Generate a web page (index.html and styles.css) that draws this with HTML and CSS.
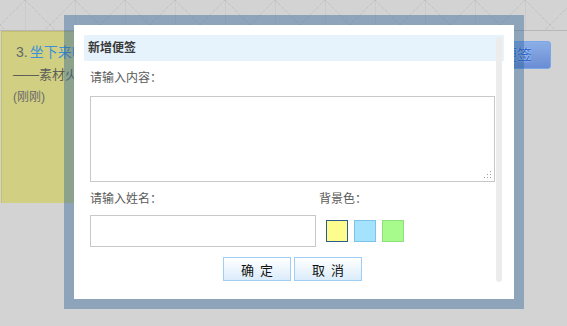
FILE: index.html
```html
<!DOCTYPE html>
<html lang="zh-CN">
<head>
    <meta charset="UTF-8">
    <title>便签墙</title>
    <link rel="stylesheet" href="styles.css">
</head>
<body>
    <div class="topbar">
        <svg width="100%" height="30">
            <defs>
                <pattern id="zig" width="50" height="30" patternUnits="userSpaceOnUse">
                    <path d="M25.5 0V30" stroke="#cbcbcb" stroke-width="1"/>
                    <path d="M25 0L55 30M25 0L-5 30M-25 0L5 30M75 0L45 30" stroke="#b9b9b9" stroke-width="1" fill="none" stroke-dasharray="1 1"/>
                </pattern>
            </defs>
            <rect width="100%" height="30" fill="url(#zig)"/>
        </svg>
    </div>

    <div class="wall">
        <div class="note">
            <p class="note-title"><span class="num">3.</span><a href="#">坐下来吃</a></p>
            <p class="note-from">——素材火</p>
            <p class="note-time">(刚刚)</p>
        </div>
        <a href="#" class="add-btn">新增便签</a>
    </div>

    <!-- 弹出层 -->
    <div class="dialog">
        <div class="panel">
            <div class="panel-head">新增便签</div>
            <div class="form">
                <div class="label">请输入内容<span class="colon">：</span></div>
                <div class="area-wrap">
                    <textarea class="content"></textarea>
                    <svg class="grip" width="8" height="8">
                        <rect x="6" y="0" width="1" height="1" fill="#a0a0a0"/>
                        <rect x="3" y="3" width="1" height="1" fill="#a0a0a0"/>
                        <rect x="6" y="3" width="1" height="1" fill="#a0a0a0"/>
                        <rect x="0" y="6" width="1" height="1" fill="#a0a0a0"/>
                        <rect x="3" y="6" width="1" height="1" fill="#a0a0a0"/>
                        <rect x="6" y="6" width="1" height="1" fill="#a0a0a0"/>
                    </svg>
                </div>
                <div class="row">
                    <div class="col-name">
                        <div class="label">请输入姓名<span class="colon">：</span></div>
                        <input type="text" class="name">
                    </div>
                    <div class="col-color">
                        <div class="label">背景色<span class="colon">：</span></div>
                        <div class="swatches">
                            <span class="swatch yellow selected"></span>
                            <span class="swatch blue"></span>
                            <span class="swatch green"></span>
                        </div>
                    </div>
                </div>
                <div class="actions">
                    <button class="btn">确&nbsp;&nbsp;定</button>
                    <button class="btn">取&nbsp;&nbsp;消</button>
                </div>
            </div>
            <div class="scrollbar"></div>
        </div>
    </div>
</body>
</html>
```

FILE: styles.css
```css
body {
    margin: 0;
    background: #d3d3d3;
    font-family: "Liberation Sans", "Noto Sans CJK SC", sans-serif;
    overflow: hidden;
}

.topbar {
    height: 30px;
    border-bottom: 1px solid #b7b7b7;
}

.topbar svg {
    display: block;
}

.wall {
    display: flex;
    justify-content: space-between;
    align-items: flex-start;
    padding-right: 16px;
}

/* 便签只露出弹层左边一截 */
.note {
    width: 72px;
    height: 171px;
    margin-left: 1px;
    overflow: hidden;
    white-space: nowrap;
    background: #d1cf82;
    border-top: 1px solid #c3c171;
    border-left: 1px solid #c3c171;
    box-shadow: 1px 2px 1px rgba(0,0,0,0.12);
}

.note p {
    margin: 0;
    overflow: hidden;
}

.note-title {
    padding: 10px 0 0 14px;
    font-size: 14px;
    line-height: 20px;
}

.note-title .num {
    color: #616a6a;
    margin-right: 2px;
}

.note-title a {
    color: #3d8fd8;
    text-decoration: none;
}

.note-from {
    padding: 4px 0 0 11px;
    font-size: 13px;
    line-height: 18px;
    color: #5b5f5b;
}

.note-time {
    padding: 4px 0 0 11px;
    font-size: 12px;
    line-height: 18px;
    color: #6a6a6a;
}

.add-btn {
    box-sizing: border-box;
    margin-top: 10px;
    width: 98px;
    height: 28px;
    padding-right: 18px;
    line-height: 26px;
    text-align: right;
    font-size: 15px;
    color: #2f6ad4;
    text-decoration: none;
    text-shadow: 0 0 2px rgba(255,255,255,0.7);
    background: linear-gradient(#8caee6, #6a8cd4);
    border: 1px solid #7aa6ea;
    border-radius: 3px;
}

/* 弹出层 */
.dialog {
    position: absolute;
    left: 64px;
    top: 15px;
    width: 420px;
    height: 254px;
    padding: 10px;
    background: #fff;
    background-clip: padding-box;
    border: 10px solid rgba(44, 96, 150, 0.41);
}

.panel {
    position: relative;
    height: 254px;
}

.panel-head {
    height: 26px;
    line-height: 26px;
    padding-left: 4px;
    background: #e6f2fc;
    font-size: 12px;
    font-weight: bold;
    color: #3a3a3a;
}

.form {
    padding: 0 9px 0 6px;
}

.label {
    font-size: 12px;
    line-height: 18px;
    color: #5a5a5a;
}

.label .colon {
    display: inline-block;
    width: 12px;
    text-align: right;
    font-family: "Liberation Sans", sans-serif;
}

.form > .label {
    margin-top: 8px;
}

.area-wrap {
    position: relative;
    margin-top: 9px;
}

.content {
    display: block;
    box-sizing: border-box;
    width: 100%;
    height: 86px;
    margin: 0;
    border: 1px solid #c8c8c8;
    resize: none;
    outline: none;
}

.grip {
    position: absolute;
    right: 3px;
    bottom: 3px;
}

.row {
    display: grid;
    grid-template-columns: 229px auto;
    margin-top: 8px;
}

.name {
    display: block;
    box-sizing: border-box;
    width: 226px;
    height: 32px;
    margin: 7px 0 0;
    border: 1px solid #c8c8c8;
    outline: none;
}

.swatches {
    display: flex;
    gap: 6px;
    margin: 12px 0 0 7px;
}

.swatch {
    box-sizing: border-box;
    width: 22px;
    height: 22px;
    border: 1px solid;
}

.yellow {
    background: #fffc8e;
    border-color: #fffc8e;
}

.blue {
    background: #a5e2fb;
    border-color: #7bc4e8;
}

.green {
    background: #a7fa8c;
    border-color: #8fe07c;
}

.swatch.selected {
    border-color: #2d5b8c;
}

.actions {
    display: flex;
    justify-content: center;
    gap: 3px;
    margin-top: 10px;
}

.btn {
    box-sizing: border-box;
    width: 68px;
    height: 24px;
    padding: 0;
    border: 1px solid #a0cdf3;
    background: linear-gradient(#ffffff, #dbecfb);
    font-family: "Noto Sans CJK SC", sans-serif;
    font-size: 13px;
    color: #111;
}

.scrollbar {
    position: absolute;
    top: 2px;
    right: 2px;
    width: 6px;
    height: 245px;
    background: #ececec;
    border-radius: 3px;
}
```
